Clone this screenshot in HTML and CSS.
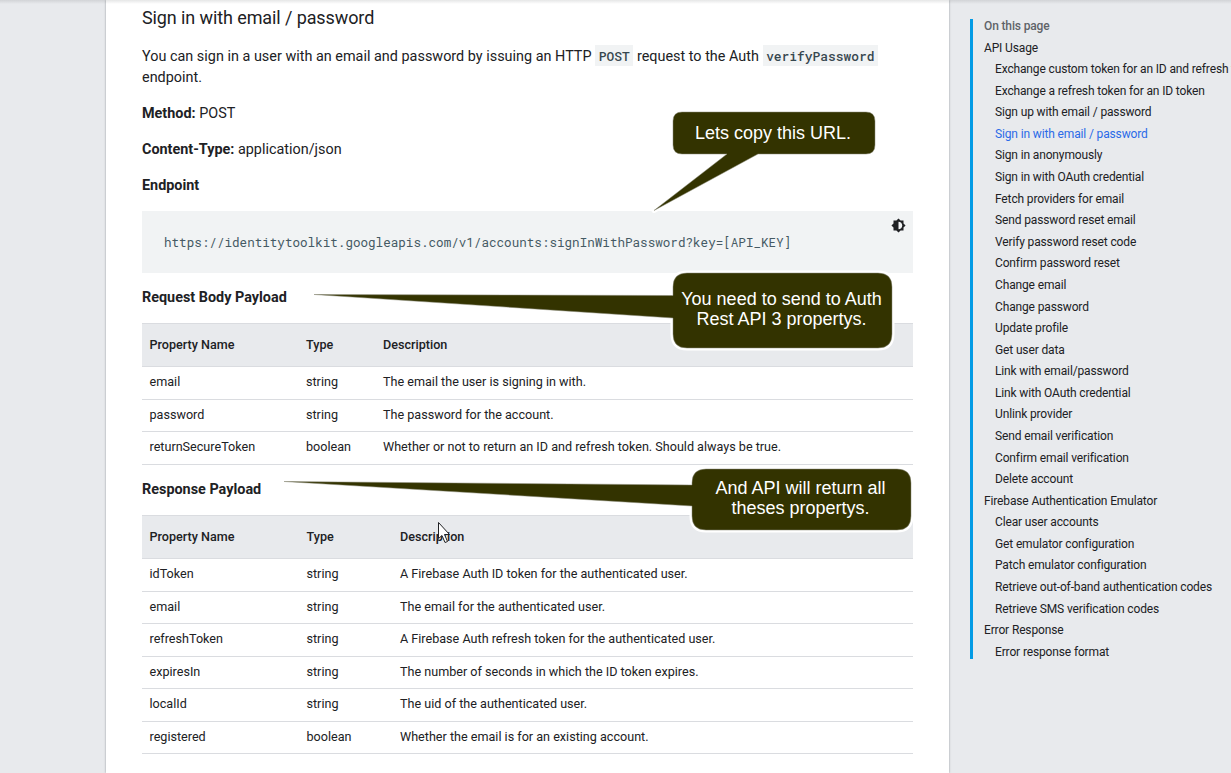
FILE: index.html
```html
<!DOCTYPE html>
<html lang="en">
<head>
<meta charset="utf-8">
<title>Firebase Auth REST API</title>
<link rel="stylesheet" href="styles.css">
</head>
<body>
<div class="page">
  <main class="article">
    <h3 class="title">Sign in with email / password</h3>
    <p class="para intro">You can sign in a user with an email and password by issuing an HTTP <code class="code">POST</code> request to the Auth <code class="code">verifyPassword</code> endpoint.</p>
    <p class="para"><strong>Method:</strong> POST</p>
    <p class="para"><strong>Content-Type:</strong> application/json</p>
    <p class="para"><strong>Endpoint</strong></p>
    <div class="snippet">
      <pre class="url">https://identitytoolkit.googleapis.com/v1/accounts:signInWithPassword?key=[API_KEY]</pre>
      <svg class="theme-icon" viewBox="0 0 24 24"><path d="M20 8.69V4h-4.69L12 .69 8.69 4H4v4.69L.69 12 4 15.310V20h4.690L12 23.310 15.310 20H20v-4.690L23.310 12zM12 18V6c3.310 0 6 2.690 6 6s-2.690 6-6 6z"/></svg>
    </div>
    <p class="para label"><strong>Request Body Payload</strong></p>
    <div class="table request">
      <div class="row head"><span>Property Name</span><span>Type</span><span>Description</span></div>
      <div class="row"><span>email</span><span>string</span><span>The email the user is signing in with.</span></div>
      <div class="row"><span>password</span><span>string</span><span>The password for the account.</span></div>
      <div class="row"><span>returnSecureToken</span><span>boolean</span><span>Whether or not to return an ID and refresh token. Should always be true.</span></div>
    </div>
    <p class="para label"><strong>Response Payload</strong></p>
    <div class="table response">
      <div class="row head"><span>Property Name</span><span>Type</span><span>Description</span></div>
      <div class="row"><span>idToken</span><span>string</span><span>A Firebase Auth ID token for the authenticated user.</span></div>
      <div class="row"><span>email</span><span>string</span><span>The email for the authenticated user.</span></div>
      <div class="row"><span>refreshToken</span><span>string</span><span>A Firebase Auth refresh token for the authenticated user.</span></div>
      <div class="row"><span>expiresIn</span><span>string</span><span>The number of seconds in which the ID token expires.</span></div>
      <div class="row"><span>localId</span><span>string</span><span>The uid of the authenticated user.</span></div>
      <div class="row"><span>registered</span><span>boolean</span><span>Whether the email is for an existing account.</span></div>
    </div>
    <p class="para label next"><strong>Sample request</strong></p>
  </main>
  <nav class="toc">
    <ul class="toc-list">
      <li class="toc-title">On this page</li>
      <li>API Usage</li>
      <li class="sub">Exchange custom token for an ID and refresh token</li>
      <li class="sub">Exchange a refresh token for an ID token</li>
      <li class="sub">Sign up with email / password</li>
      <li class="sub active">Sign in with email / password</li>
      <li class="sub">Sign in anonymously</li>
      <li class="sub">Sign in with OAuth credential</li>
      <li class="sub">Fetch providers for email</li>
      <li class="sub">Send password reset email</li>
      <li class="sub">Verify password reset code</li>
      <li class="sub">Confirm password reset</li>
      <li class="sub">Change email</li>
      <li class="sub">Change password</li>
      <li class="sub">Update profile</li>
      <li class="sub">Get user data</li>
      <li class="sub">Link with email/password</li>
      <li class="sub">Link with OAuth credential</li>
      <li class="sub">Unlink provider</li>
      <li class="sub">Send email verification</li>
      <li class="sub">Confirm email verification</li>
      <li class="sub">Delete account</li>
      <li>Firebase Authentication Emulator</li>
      <li class="sub">Clear user accounts</li>
      <li class="sub">Get emulator configuration</li>
      <li class="sub">Patch emulator configuration</li>
      <li class="sub">Retrieve out-of-band authentication codes</li>
      <li class="sub">Retrieve SMS verification codes</li>
      <li>Error Response</li>
      <li class="sub">Error response format</li>
    </ul>
  </nav>
  <div class="top-shadow"></div>
  <svg class="annotations" viewBox="0 0 1231 773">
    <g class="halo">
      <path d="M682 112H866Q875 112 875 121V145Q875 154 866 154H758L654 210.500 727 154H682Q673 154 673 145V121Q673 112 682 112Z"/>
      <path d="M687 273H878Q892 273 892 287V334Q892 348 878 348H687Q673 348 673 334V318L314 294.500 673 295.500V287Q673 273 687 273Z"/>
      <path d="M706 469H897Q911 469 911 483V516Q911 530 897 530H706Q692 530 692 516V506L284 481.500 692 485V483Q692 469 706 469Z"/>
    </g>
    <g class="bubble">
      <path d="M682 112H866Q875 112 875 121V145Q875 154 866 154H758L654 210.500 727 154H682Q673 154 673 145V121Q673 112 682 112Z"/>
      <path d="M687 273H878Q892 273 892 287V334Q892 348 878 348H687Q673 348 673 334V318L314 294.500 673 295.500V287Q673 273 687 273Z"/>
      <path d="M706 469H897Q911 469 911 483V516Q911 530 897 530H706Q692 530 692 516V506L284 481.500 692 485V483Q692 469 706 469Z"/>
    </g>
    <path class="cursor" d="M438.500 522.500V538.500L442 535.500 445 542.500 447.500 541.500 444.500 534.500H449.500Z"/>
  </svg>
  <div class="callout callout-url">Lets copy this URL.</div>
  <div class="callout callout-request">You need to send to Auth<br>Rest API 3 propertys.</div>
  <div class="callout callout-response">And API will return all<br>theses propertys.</div>
</div>
</body>
</html>
```
FILE: styles.css
```css
* { box-sizing: border-box; }
body {
  margin: 0;
  background: #e8eaed;
  color: #202124;
  font-family: Roboto, sans-serif;
  overflow: hidden;
}
.page {
  position: relative;
  display: flex;
  width: 1231px;
  height: 773px;
  overflow: hidden;
}
.article {
  flex: none;
  width: 843px;
  height: 773px;
  margin-left: 106px;
  padding: 4px 36px 0;
  background: #fff;
  box-shadow: 0 0 2px rgba(60, 64, 67, .5);
  overflow: hidden;
}
.title {
  margin: 0 0 14px;
  font-size: 18px;
  line-height: 28px;
  font-weight: 400;
  letter-spacing: -.1px;
}
.para {
  margin: 0 0 14.4px;
  font-size: 14.4px;
  line-height: 21.6px;
  height: 21.6px;
}
.para strong { font-weight: 700; }
.intro { height: 42.6px; line-height: 21.4px; letter-spacing: .01px; }
.code {
  padding: 2px 3.6px;
  background: #f1f3f4;
  color: #37474f;
  font: 500 12.9px/1 "Roboto Mono", "DejaVu Sans Mono", monospace;
}
.snippet {
  display: flex;
  justify-content: space-between;
  height: 62px;
  padding: 7px 7px 0 22px;
  background: #f1f3f4;
}
.url {
  margin: 13px 0 0;
  color: #455a64;
  font: 12.6px/22px "Roboto Mono", "DejaVu Sans Mono", monospace;
}
.theme-icon { width: 15px; height: 15px; margin-top: .5px; fill: #202124; }
.label { margin: 0; height: 50px; padding-top: 14px; }
.next { padding-top: 15px; }
.table { font-size: 12.6px; }
.row {
  display: grid;
  align-items: center;
  height: 32.55px;
  padding: 0 0 2.4px 7.5px;
  border-bottom: 1px solid #dadce0;
}
.request .row { grid-template-columns: 156.5px 77px 1fr; }
.response .row { grid-template-columns: 157px 93.5px 1fr; }
.row.head {
  height: 44.3px;
  padding-bottom: 1.5px;
  background: #e8eaed;
  border-top: 1px solid #dadce0;
  font-weight: 500;
}
.toc { flex: none; width: 282px; padding: 19px 0 0 21px; overflow: hidden; }
.toc-list {
  margin: 0;
  height: 640px;
  padding: 1.1px 0 0 11px;
  border-left: 3px solid #039be5;
  list-style: none;
  font-size: 12px;
  letter-spacing: -.14px;
  line-height: 21.58px;
  white-space: nowrap;
}
.toc-list li { height: 21.58px; }
.toc-list .toc-title { height: 17.5px; line-height: 12.6px; color: #5f6368; font-weight: 500; }
.toc-list .sub { padding-left: 11px; }
.toc-list .active { color: #2b6be8; }
.top-shadow {
  position: absolute;
  top: 0;
  left: 0;
  right: 0;
  height: 4px;
  background: linear-gradient(rgba(60, 64, 67, .13), transparent);
}
.annotations { position: absolute; top: 0; left: 0; width: 1231px; height: 773px; }
.halo { fill: #fff; stroke: #fff; stroke-width: 5px; stroke-linejoin: round; }
.bubble { fill: #330; stroke: #8a8a78; stroke-width: .5px; }
.cursor { fill: #fff; stroke: #202124; stroke-width: 1px; }
.callout {
  position: absolute;
  color: #fff;
  font: 18px/20px "Liberation Sans", Arial, sans-serif;
  text-align: center;
  white-space: nowrap;
}
.callout-url { left: 673px; top: 123px; width: 200px; }
.callout-request { left: 673px; top: 289px; width: 217px; }
.callout-response { left: 692px; top: 478px; width: 217px; }
```
